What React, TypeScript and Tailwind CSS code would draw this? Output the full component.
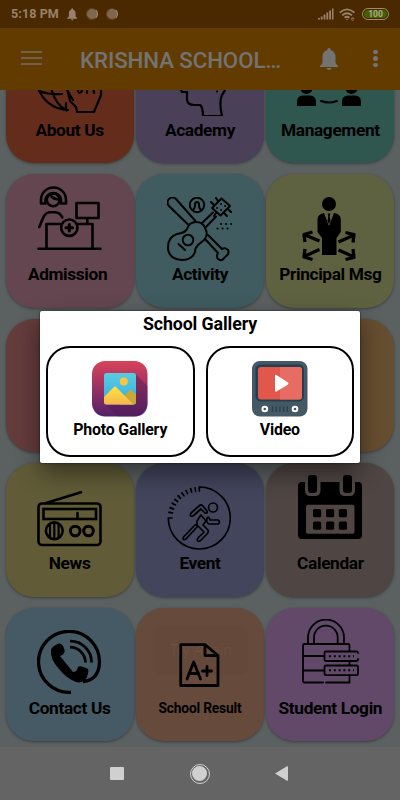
import type { ReactNode } from "react";

const About = () => (
  <svg width="66" height="66" viewBox="0 0 66 66" fill="none" stroke="black" strokeWidth="2.2" strokeLinecap="round">
    <path d="M1 36A31 31 0 0 0 31 60M2 41Q12 45 25 44M13 32Q16 53 29 60M29 53V60L24 57" />
    <path d="M30 38L33 51L39 57L40 62H57L64 45V38M30 40L36 50M41 30V41Q42 45 45 41V36M50 38V43M50 38Q57 35 57 43" />
  </svg>
);

const Academy = () => (
  <svg width="66" height="66" viewBox="0 0 66 66" fill="none" stroke="black" strokeWidth="2.2">
    <path d="M17 30L14 40L15 42H20V50Q21 55 27 55H33Q36 57 36 66H55Q51 49 57 42Q60 37 60 28" />
    <circle cx="50" cy="41.5" r="1" fill="black" stroke="none" />
  </svg>
);

const Management = () => (
  <svg width="66" height="66" viewBox="0 0 66 66">
    <circle cx="9.5" cy="38" r="6" />
    <circle cx="54.5" cy="38" r="6" />
    <path d="M0 56V52Q0 45.500 6 45.500H13Q19 45.500 19 52V56ZM45 56V52Q45 45.500 51 45.500H58Q64 45.500 64 52V56Z" />
    <path d="M24 51Q32 54 40 51" fill="none" stroke="black" strokeWidth="2" strokeLinecap="round" />
  </svg>
);

const Admission = () => (
  <svg width="65" height="65" viewBox="0 0 65 65" fill="none" stroke="black" strokeWidth="2.6" strokeLinecap="round" strokeLinejoin="round">
    <path d="M4 17.500V14A12.500 12.500 0 0 1 29 14V17.500H24V14A7.800 7.800 0 0 0 8.500 14V17.500Z" />
    <circle cx="16.200" cy="13.800" r="6.400" />
    <path d="M13.500 8.500Q15 13 22 13.500M2.300 41L6 32Q8.500 26.500 13 26.300H18Q23 26.500 25.300 31.500" />
    <path d="M39.500 17H61.500V32H39.500ZM50.300 32V38M9.500 62V38H24.500M40.500 38H55.500V62M1.500 62.700H63.500" />
    <circle cx="32.300" cy="41.700" r="8.200" />
    <path d="M32.300 38.500V45M29 41.700H35.600" strokeWidth="3" />
  </svg>
);

const Activity = () => (
  <svg width="66" height="65" viewBox="0 0 66 65" fill="none" stroke="black" strokeWidth="2" strokeLinecap="round" strokeLinejoin="round">
    <path d="M20.500 27L2 9A4.700 4.700 0 0 1 9 2L28 23.500" />
    <path d="M29 25Q36 25 38 31Q42 38 37 43L31 48Q28 51 28 55Q25 63 15 63Q1 62 1 50Q1 40 10 37Q18 36 20 32Q22 25 29 25Z" />
    <circle cx="21" cy="43" r="5.300" />
    <path d="M11.500 47L18 53M35 26L46 15.500M39 30L49 19.500" />
    <path d="M45 11L54.500 1.500L63 9L53.500 18.500Z" />
    <path d="M47 8L44 5M51 4L49 1M62 13L64 15M57 16L60 19M49 16L47 19" />
    <path d="M50 11H50.100M54 7H54.100M54 13H54.100M58 9H58.100" strokeWidth="1.800" />
    <circle cx="30" cy="8" r="7.200" />
    <path d="M25.500 13Q28 12 28 8Q28 5 30 5T32 8Q32 12 34.500 13" />
    <path d="M38 42L51 56Q49 59 51 62Q55 65 58 60Q63 57 61 53Q58 50 55 52L41 38" />
    <path d="M54 27H54.100M59 27H59.100M64 27H64.100M50.500 31.500H50.600M55.500 31.500H55.600M60.500 31.500H60.600" />
  </svg>
);

const Principal = () => (
  <svg width="56" height="65" viewBox="0 0 56 65">
    <circle cx="27" cy="7" r="7" />
    <path d="M22 16L27 29L32 16Q38.500 17 38.800 22V35L34.500 41V58H20V41L15.500 35V22Q16 17 22 16Z" />
    <path d="M25.500 16.500H28.500L27.700 19L28.500 24L27 27L25.500 24L26.300 19Z" />
    <g fill="none" stroke="black" strokeWidth="3.300" strokeLinejoin="round">
      <path d="M17.500 44L3 38M3 45L2 37.500L10.500 35" />
      <path d="M17.500 52.500L3 59M3 52L2 60L10.500 62.500" />
      <path d="M36.500 45L51 38.500M43.500 35.500L52 37.500L51 45.500" />
      <path d="M36.500 53L51 59.500M51 52L52 60.500L43.500 62.500" />
    </g>
  </svg>
);

const News = () => (
  <svg width="65" height="65" viewBox="0 0 65 65" fill="none" stroke="black" strokeWidth="2.600" strokeLinecap="round">
    <path d="M9 17L44 6.300" />
    <rect x="1.500" y="17.500" width="62" height="41.500" rx="3.500" />
    <rect x="6.500" y="23" width="52.500" height="10" strokeLinecap="butt" />
    <path d="M40.500 27V32" />
    <circle cx="17.300" cy="44.800" r="8.400" />
    <path d="M13 38V52M17.300 37V53M21.600 38V52" strokeWidth="2.200" />
    <circle cx="38.200" cy="45" r="4.800" strokeWidth="3" />
    <circle cx="51.500" cy="45" r="4.800" strokeWidth="3" />
  </svg>
);

const Event = () => (
  <svg width="65" height="65" viewBox="0 0 65 65" fill="none" stroke="black" strokeWidth="1.700" strokeLinecap="round" strokeLinejoin="round">
    <path d="M5 32H1.300A31 31 0 1 0 32.300 1V5" />
    <path d="M3.500 27.500A29 29 0 0 1 29 3.500" strokeWidth="5" strokeDasharray="1.800 2.700" strokeLinecap="butt" />
    <circle cx="46" cy="21.500" r="4.500" />
    <path d="M24 27L32 20Q34 18 36 20L40 25Q41 28 38 27L34 23L26 30Q22 31 24 27Z" />
    <path d="M16.500 51L28 39Q31 38 30 41L19 53Q15 55 16.500 51Z" />
    <path d="M30 35L34 29L39 35L36 39L41 44Q42 46 40 48L33 55Q29 56 31 52L37 46L30 39Z" />
    <path d="M40 32Q42 30 43 34H51Q54 36 51 38H42Q39 37 40 32Z" />
  </svg>
);

const Calendar = () => (
  <svg width="64" height="64" viewBox="0 0 64 64">
    <rect y="7" width="64" height="57" rx="4" />
    <path d="M7 0H22.500V15Q22.500 21 17 21H12.500Q7 21 7 15ZM41.500 0H57V15Q57 21 51.500 21H47Q41.500 21 41.500 15Z" fill="#4f4643" />
    <rect x="10" y="0" width="9" height="18" rx="3" />
    <rect x="45" y="0" width="9" height="18" rx="3" />
    <rect x="8" y="29.700" width="48.500" height="29" rx="2" fill="#4f4643" />
    {[15, 28, 40.800].map((x) => (
      <g key={x}>
        <rect x={x} y="34" width="8.200" height="8.200" rx="1.500" />
        <rect x={x} y="46.500" width="8.200" height="8.200" rx="1.500" />
      </g>
    ))}
  </svg>
);

const Contact = () => (
  <svg width="65" height="65" viewBox="0 0 65 65" fill="none" stroke="black" strokeWidth="3.300" strokeLinecap="butt">
    <path d="M34 62.300A30.500 30.500 0 1 1 62.500 32Q62 50 46 51.500" />
    <path d="M33 11.200A21 21 0 0 1 54.500 32.500M33 17.200A15.500 15.500 0 0 1 48.500 32.500" strokeWidth="2.800" />
    <path d="M14 21Q14 16 22 13.500Q26 13 27.500 20Q28.500 24 23 26L36 42Q40 42 41 37Q43 35 51 39Q52 41 50 47Q47 54 39 52Q29 48 22 39Q13 29 14 21Z" fill="black" stroke="none" />
  </svg>
);

const Result = () => (
  <svg width="41" height="45" viewBox="0 0 41 45" fill="none" stroke="black" strokeWidth="2.800" strokeLinejoin="round" strokeLinecap="round">
    <path d="M1.700 1.700H26L39 12.500V42.500H1.700ZM26 1.700V12.500H39" />
    <path d="M8 36L14.700 19L21.500 36M10 30.500H19.500M28 23.500V32.500M23.500 28H32.500" />
  </svg>
);

const Login = () => (
  <svg width="57" height="65" viewBox="0 0 57 65" fill="none" stroke="black" strokeWidth="1.800" strokeLinecap="round">
    <path d="M6 24V18.500A18 18 0 0 1 42 18.500V24M12 24V18.500A11.800 11.800 0 0 1 35.700 18.500V24" />
    <path d="M21 63.500H2.500Q1 63.500 1 62V26.500Q1 25 2.500 25H46Q47.500 25 47.500 26.500V32M47.500 42.500V46M47.500 56.500V63.500H24M1 37H22M1 51.500H22" />
    <path d="M56 34Q56 32.500 54.500 32.500H24Q22.500 32.500 22.500 34V40.500Q22.500 42 24 42H54.500Q56 42 56 40" />
    <rect x="22.500" y="46.500" width="33.500" height="9.700" rx="1.500" />
    <path d="M27 37.200H52M27 51.300H52" strokeWidth="2" strokeDasharray="2 2.800" strokeLinecap="butt" />
  </svg>
);

interface TileProps {
  label?: string;
  color: string;
  pad?: string;
  text?: string;
  children?: ReactNode;
}

const Tile = ({ label, color, pad = "pt-[22.5px]", text = "text-[17.3px] tracking-[-0.36px]", children }: TileProps) => (
  <div className={`flex flex-col items-center rounded-[28px] shadow-[0_1px_3px_rgba(0,0,0,0.35)] ${color}`}>
    <div className={`h-[88px] shrink-0 ${pad}`}>{children}</div>
    <p className={`whitespace-nowrap font-bold leading-6 ${text}`}>{label}</p>
  </div>
);

const StatusBar = () => (
  <div className="flex h-7 shrink-0 items-center bg-[#4a2800] pl-[11px] pr-[11px] text-[#99816b]">
    <span className="text-[12.5px] font-bold tracking-[0.1px]">5:18 PM</span>
    <svg className="ml-2" width="10.5" height="13" viewBox="0 0 11 13" fill="currentColor">
      <path d="M5.500 0Q6.500 0 6.500 1.200Q9 2 9 5V8.500L11 10.500V11H0V10.500L2 8.500V5Q2 2 4.500 1.200Q4.500 0 5.500 0ZM4 11.500H7L5.500 13Z" />
    </svg>
    <span className="ml-[9px] size-3 rounded-full border border-[#5f4024] border-r-[#a58a70] bg-[#80664e]" />
    <span className="ml-2 size-3 rounded-full border border-[#5f4024] border-r-[#a58a70] bg-[#80664e]" />
    <div className="ml-auto flex items-center">
      <svg width="16" height="12" viewBox="0 0 16 12" fill="currentColor">
        <path d="M0 10H2V11.500H0ZM2.800 8.500H4.600V11.500H2.800ZM5.600 6.500H7.400V11.500H5.600ZM8.400 4.500H10.200V11.500H8.400ZM11.200 2.500H13V11.500H11.200ZM14 .5H15.500V11.500H14Z" />
      </svg>
      <svg className="ml-[5px]" width="17" height="13" viewBox="0 0 17 13" fill="none" stroke="currentColor" strokeWidth="1.800">
        <path d="M.7 4.700Q8 -2 15.500 4.700M3.200 7.400Q8 3 13 7.400M5.600 9.800Q8 7.800 10.500 9.800" />
        <circle cx="8" cy="11.500" r=".8" fill="currentColor" stroke="none" />
        <path d="M12.500 10.800H15A1.300 1.300 0 1 0 14.600 12" strokeWidth=".8" />
      </svg>
      <span className="ml-[6px] flex h-3 w-[27px] items-center justify-center rounded-full border border-[#a08a73] bg-[#466000] text-[8.5px] font-bold text-[#b0a890] outline outline-offset-[-2px] outline-[#4a2800]">
        100
      </span>
    </div>
  </div>
);

const Header = () => (
  <div className="flex h-[62px] shrink-0 items-center bg-[#623b00] pl-[21px] pr-[21px] text-[#737373]">
    <div className="mb-[3px] flex flex-col gap-1 text-[#73604a]">
      <span className="h-[2px] w-[21px] bg-current" />
      <span className="h-[2px] w-[21px] bg-current" />
      <span className="h-[2px] w-[21px] bg-current" />
    </div>
    <h1 className="ml-[38px] mt-[3px] w-[206px] whitespace-nowrap text-[22.3px] font-medium tracking-[-0.1px]">KRISHNA SCHOOL…</h1>
    <svg className="ml-[34px]" width="18" height="22" viewBox="0 0 18 22" fill="currentColor">
      <path d="M9 0Q10.700 0 10.700 2Q15.500 3.500 15.500 9V15L18 18V19H0V18L2.500 15V9Q2.500 3.500 7.300 2Q7.300 0 9 0ZM6.500 20H11.500Q11 22 9 22T6.500 20Z" />
    </svg>
    <div className="mb-[1px] ml-auto mr-[1px] flex flex-col gap-[2px]">
      <span className="size-[4.6px] rounded-full bg-current" />
      <span className="size-[4.6px] rounded-full bg-current" />
      <span className="size-[4.6px] rounded-full bg-current" />
    </div>
  </div>
);

const PhotoIcon = () => (
  <svg width="56" height="56" viewBox="0 0 56 56">
    <defs>
      <linearGradient id="frame" x1="0" y1="0" x2="0" y2="1">
        <stop offset="0" stopColor="#d9435a" />
        <stop offset="1" stopColor="#532069" />
      </linearGradient>
      <linearGradient id="hill" x1="0" y1="0" x2="0" y2="1">
        <stop offset="0" stopColor="#ffe33f" />
        <stop offset="1" stopColor="#f9b64d" />
      </linearGradient>
      <linearGradient id="sky" x1="0" y1="0" x2="0" y2="1">
        <stop offset="0" stopColor="#5bcbe0" />
        <stop offset="1" stopColor="#32afe0" />
      </linearGradient>
    </defs>
    <rect width="55.500" height="55.500" rx="13" fill="url(#frame)" />
    <path d="M43.500 13L55.500 25V42.500Q55.500 55.500 42.500 55.500H26L12 42Z" fill="#4a1850" opacity=".4" />
    <rect x="12" y="12" width="32" height="31.500" rx="2.500" fill="url(#sky)" />
    <circle cx="31.800" cy="20.500" r="4" fill="#fbc740" />
    <path d="M28 39L38.500 28.500L44 33.500V41Q44 43.500 41.500 43.500H28Z" fill="#c8a83a" />
    <path d="M12 36L23 25L41.500 43.500H14.500Q12 43.500 12 41Z" fill="url(#hill)" />
  </svg>
);

const VideoIcon = () => (
  <svg width="56" height="56" viewBox="0 0 56 56">
    <rect width="55.500" height="55.500" rx="8" fill="#445964" />
    <rect x="3.500" y="3.500" width="48.500" height="37" rx="5" fill="#263f4e" />
    <rect x="6" y="6" width="44" height="32.500" rx="3" fill="#e2574c" />
    <path d="M28 6H47Q50 6 50 9V35.500Q50 38.500 47 38.500H28Z" fill="#e66c64" />
    <path d="M23 14Q23.500 13.500 24.500 14L36 21.500Q37 22.500 36 23.500L24.500 30.500Q23 31 23 29.500Z" fill="white" />
    <circle cx="12.800" cy="48" r="3.300" fill="white" />
    <circle cx="12.800" cy="48" r="1.300" fill="#445964" />
    <circle cx="43" cy="48" r="3.300" fill="white" />
    <circle cx="43" cy="48" r="1.300" fill="#445964" />
    <path d="M20.500 45.500V51M24.200 45.500V51M27.900 45.500V51M31.600 45.500V51M35.300 45.500V51" stroke="#263f4e" strokeWidth="1.300" />
  </svg>
);

const GalleryDialog = () => (
  <div className="absolute left-10 top-[310.5px] flex h-[152px] w-80 flex-col rounded-[2px] bg-white shadow-[0_10px_24px_rgba(0,0,0,0.45),0_0_2px_rgba(0,0,0,0.8)]">
    <h2 className="mt-px text-center text-[17.8px] font-bold leading-6 tracking-[-0.1px]">School Gallery</h2>
    <div className="mt-[10px] flex gap-[11px] px-[6px]">
      <div className="flex h-[111px] flex-1 flex-col items-center rounded-[24px] border-2 border-black pt-[13px]">
        <PhotoIcon />
        <p className="mt-px text-[15.9px] font-bold leading-6 tracking-[-0.2px]">Photo Gallery</p>
      </div>
      <div className="flex h-[111px] flex-1 flex-col items-center rounded-[24px] border-2 border-black pt-[13px]">
        <VideoIcon />
        <p className="mt-px text-[15.9px] font-bold leading-6 tracking-[-0.2px]">Video</p>
      </div>
    </div>
  </div>
);

const NavBar = () => (
  <div className="flex h-[53px] shrink-0 items-center bg-[#646464] pl-[110px]">
    <span className="size-[13.5px] rounded-[1px] bg-[#d0d0d0]" />
    <span className="ml-[66px] flex size-5 items-center justify-center rounded-full border-[1.5px] border-[#d0d0d0]">
      <span className="size-[15px] rounded-full bg-[#d0d0d0]" />
    </span>
    <svg className="ml-[65px]" width="13" height="15" viewBox="0 0 13 15" fill="#d0d0d0">
      <path d="M0 7.500L12 .3Q13 0 13 1V14Q13 15 12 14.700Z" />
    </svg>
  </div>
);

const App = () => {
  return (
    <div className="relative flex h-[800px] w-[400px] flex-col overflow-hidden bg-[#5b6060] font-['Roboto',sans-serif] text-black">
      <StatusBar />
      <Header />
      <main className="flex-1 overflow-hidden">
        <div className="-mt-[60px] grid auto-rows-[133.3px] grid-cols-3 gap-x-[2.2px] gap-y-[11.2px] pl-[5.5px] pr-[5.5px]">
          <Tile label="About Us" color="bg-[#642d1b]" pad="pt-5"><About /></Tile>
          <Tile label="Academy" color="bg-[#4a4058]" pad="pt-5"><Academy /></Tile>
          <Tile label="Management" color="bg-[#305650]" pad="pt-5"><Management /></Tile>
          <Tile label="Admission" color="bg-[#644650]" pad="pt-[11.5px]" text="text-[17.3px] tracking-[-0.36px] pr-1"><Admission /></Tile>
          <Tile label="Activity" color="bg-[#405c60]"><Activity /></Tile>
          <Tile label="Principal Msg" color="bg-[#5f6240]"><Principal /></Tile>
          <Tile color="bg-[#643c3c]" />
          <Tile color="bg-[#405c60]" />
          <Tile color="bg-[#664e30]" />
          <Tile label="News" color="bg-[#615c37]"><News /></Tile>
          <Tile label="Event" color="bg-[#42455c]"><Event /></Tile>
          <Tile label="Calendar" color="bg-[#4f4643]" pad="pt-[11.5px]"><Calendar /></Tile>
          <Tile label="Contact Us" color="bg-[#455a65]"><Contact /></Tile>
          <Tile label="School Result" color="bg-[#664a3b]" pad="pt-[35px]" text="text-[13.8px] tracking-[-0.2px]"><Result /></Tile>
          <Tile label="Student Login" color="bg-[#62496a]" pad="pt-[11.5px]"><Login /></Tile>
        </div>
      </main>
      <NavBar />
      <div className="absolute left-[153px] top-[625px] flex h-[50px] w-[95px] items-center justify-center rounded-lg bg-black/[0.02] text-[15px] text-white/[0.06]">
        Try Again
      </div>
      <GalleryDialog />
    </div>
  );
};

export default App;
